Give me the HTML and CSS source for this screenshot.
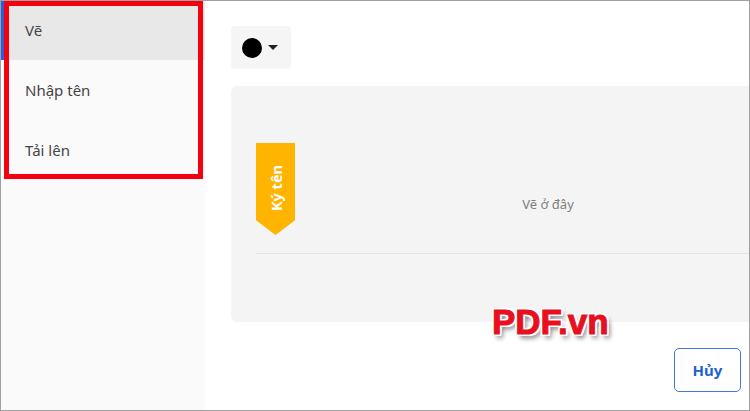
FILE: index.html
```html
<!DOCTYPE html>
<html lang="vi">
<head>
  <meta charset="UTF-8" />
  <meta name="viewport" content="width=device-width, initial-scale=1.0"/>
  <title>Ký tên</title>
  <link rel="stylesheet" href="styles.css">
</head>
<body>
  <div class="khung">
    <!-- Menu bên trái -->
    <nav class="menu">
      <a class="muc dang-chon" href="#">Vẽ</a>
      <a class="muc" href="#">Nhập tên</a>
      <a class="muc" href="#">Tải lên</a>
    </nav>

    <main class="noi-dung">
      <button class="chon-mau" type="button">
        <span class="cham-mau"></span>
        <span class="mui-ten"></span>
      </button>

      <section class="vung-ve">
        <div class="dong-ky">
          <div class="nhan-ky"><span>Ký tên</span></div>
          <p class="goi-y">Vẽ ở đây</p>
        </div>
      </section>

      <div class="chan">
        <button class="nut-huy" type="button">Hủy</button>
      </div>
    </main>

    <!-- Chú thích đè lên ảnh -->
    <div class="vien-do"></div>
    <div class="dau-nuoc">PDF.vn</div>
  </div>
</body>
</html>
```

FILE: styles.css
```css
html, body {
  margin: 0;
  padding: 0;
  height: 100%;
  overflow: hidden;
  font-family: "Noto Sans", sans-serif;
}

.khung {
  position: relative;
  box-sizing: border-box;
  width: 750px;
  height: 411px;
  display: flex;
  border: 1px solid #a0a0a0;
  overflow: hidden;
  background: #fff;
}

/* Menu */
.menu {
  width: 204px;
  flex: none;
  display: flex;
  flex-direction: column;
  background: #fafafa;
}

.muc {
  box-sizing: border-box;
  height: 60px;
  padding: 18px 0 0 24px;
  font-size: 15px;
  line-height: 24px;
  color: #444;
  text-decoration: none;
}

.muc.dang-chon {
  height: 59px;
  padding: 17px 0 0 21px;
  border-left: 3px solid #2a5ee0;
  background: #e8e8e8;
}

/* Nội dung */
.noi-dung {
  flex: 1;
  min-width: 0;
  padding: 25px 0 0 26px;
}

.chon-mau {
  width: 60px;
  height: 43px;
  display: flex;
  align-items: center;
  gap: 6px;
  padding: 0 0 0 11px;
  border: none;
  border-radius: 4px;
  background: #f5f5f5;
}

.cham-mau {
  width: 20px;
  height: 20px;
  border-radius: 50%;
  background: #000;
}

.mui-ten {
  width: 0;
  height: 0;
  border-left: 5px solid transparent;
  border-right: 5px solid transparent;
  border-top: 5px solid #222;
}

.vung-ve {
  box-sizing: border-box;
  height: 236px;
  margin-top: 17px;
  padding: 57px 0 0 25px;
  border-radius: 6px 0 0 6px;
  background: #f4f4f4;
}

.dong-ky {
  height: 110px;
  display: flex;
  border-bottom: 1px solid #e2e2e2;
}

.nhan-ky {
  width: 39px;
  height: 92px;
  flex: none;
  display: flex;
  align-items: center;
  justify-content: center;
  background: #ffb400;
  clip-path: polygon(0 0, 100% 0, 100% 84%, 50% 100%, 0 84%);
}

.nhan-ky span {
  writing-mode: vertical-rl;
  transform: rotate(180deg);
  margin-bottom: 2px;
  font-size: 14.5px;
  font-weight: 700;
  color: #fff;
}

.goi-y {
  flex: 1;
  margin: 0;
  padding: 52px 0 0 52px;
  text-align: center;
  font-size: 13px;
  line-height: 18px;
  color: #808080;
}

.chan {
  display: flex;
  justify-content: flex-end;
  padding: 26px 8px 0 0;
}

.nut-huy {
  width: 67px;
  height: 44px;
  border: 1px solid #3f78e0;
  border-radius: 5px;
  background: #fff;
  font-family: inherit;
  font-size: 15px;
  font-weight: 700;
  color: #1f5fd6;
}

/* Khung đỏ và dấu nước */
.vien-do {
  position: absolute;
  top: 0;
  left: 3px;
  width: 199px;
  height: 178px;
  box-sizing: border-box;
  border: 5px solid #f5000f;
}

.dau-nuoc {
  position: absolute;
  top: 301px;
  left: 491px;
  font-family: "Liberation Sans", sans-serif;
  font-size: 35px;
  font-weight: 700;
  line-height: 40px;
  color: #e8101f;
  -webkit-text-stroke: 1px #e8101f;
  text-shadow:
    2px 0 0 #fff, -2px 0 0 #fff, 0 2px 0 #fff, 0 -2px 0 #fff,
    2px 2px 0 #fff, -2px -2px 0 #fff, 2px -2px 0 #fff, -2px 2px 0 #fff,
    3px 4px 5px rgba(0,0,0,0.55);
}
```
